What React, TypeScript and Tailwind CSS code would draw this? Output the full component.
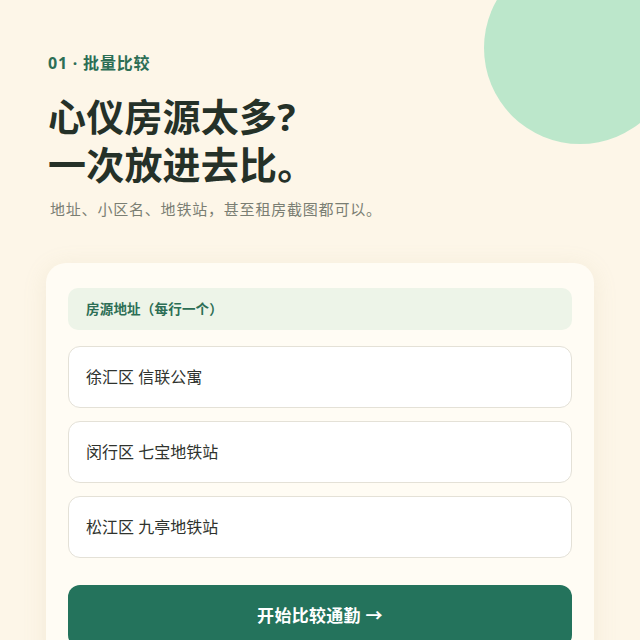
export default function App() {
  const rows = ["徐汇区 信联公寓", "闵行区 七宝地铁站", "松江区 九亭地铁站"];

  return (
    <main
      className="relative w-[640px] h-[640px] overflow-hidden bg-[#fdf6e8]"
      style={{ fontFamily: '"Noto Sans", "Noto Sans CJK SC", sans-serif' }}
    >
      {/* decorative circle */}
      <div className="absolute left-[484px] top-[-48px] w-[192px] h-[192px] rounded-full bg-[#bce7cb]" />

      <div className="relative px-12 pt-[50px]">
        <p className="text-[16px] font-bold text-[#2c6e55] leading-[26px] tracking-[0.8px]">01 · 批量比较</p>

        <h1 className="mt-[16px] text-[38px] font-bold leading-[48px] text-[#253128] tracking-[0.2px]">
          <span className="block">心仪房源太多?</span>
          <span className="block">一次放进去比。</span>
        </h1>

        <p className="mt-[10px] pl-[2px] text-[15px] leading-[22px] text-[#7a7e73] tracking-[0.8px]">
          地址、小区名、地铁站，甚至租房截图都可以。
        </p>
      </div>

      {/* input card */}
      <section className="absolute left-[46px] top-[263px] w-[548px] rounded-[20px] bg-[#fffcf4] px-[22px] pt-[25px] pb-[24px] shadow-[0_4px_24px_rgba(180,160,110,0.14)]">
        <div className="h-[42px] rounded-[10px] bg-[#edf4e8] px-[18px] flex items-center">
          <span className="text-[13.5px] font-bold text-[#2c6e55] tracking-[0.2px]">房源地址（每行一个）</span>
        </div>

        <div className="mt-[16px] flex flex-col gap-[13px]">
          {rows.map((r) => (
            <div
              key={r}
              className="h-[62px] rounded-[12px] border-[1.5px] border-[#e4e1d7] bg-white px-[17px] flex items-center text-[16px] text-[#2f332e]"
            >
              {r}
            </div>
          ))}
        </div>

        <button className="mt-[27px] w-full h-[62px] rounded-[12px] bg-[#24735c] text-white text-[17px] font-bold flex items-center justify-center tracking-[0.3px]">
          开始比较通勤 →
        </button>
      </section>
    </main>
  );
}
